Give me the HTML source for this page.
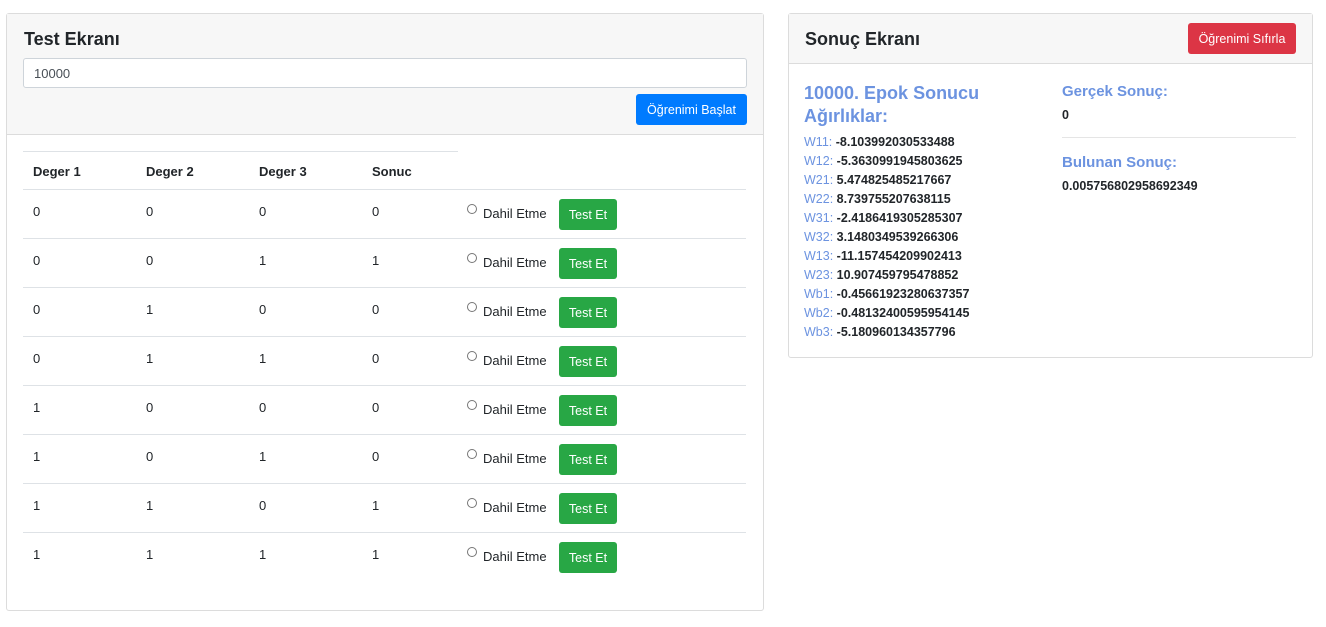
<!DOCTYPE html>
<html><head><meta charset="utf-8"><style>
*{box-sizing:border-box;margin:0;padding:0}
body{width:1326px;height:627px;background:#fff;font-family:"Liberation Sans",sans-serif;color:#212529;font-size:13px;position:relative;overflow:hidden}
.card{position:absolute;border:1px solid #dcdcdc;border-radius:3px;background:#fff}
.hdr{background:#f7f7f7;border-bottom:1px solid #dcdcdc;position:absolute;left:0;right:0;top:0}
h2{font-size:18px;font-weight:bold;position:absolute}
.btn{position:absolute;color:#fff;border-radius:3px;font-size:12.5px;display:flex;align-items:center;justify-content:center;white-space:nowrap}
.abs{position:absolute;white-space:nowrap}
.row{position:absolute;left:16px;width:723px;height:49px;border-top:1px solid #dee2e6}
.row span{position:absolute;top:14px}
.radio{position:absolute;left:444px;top:14px;width:10px;height:10px;border:1px solid #767676;border-radius:50%}
.w{position:absolute;left:15px;white-space:nowrap;font-size:12.5px}
.w b{color:#212529}
.w i{font-style:normal;color:#6c93e0}
.blue{color:#6c93e0}
</style></head><body>
<div class="card" style="left:6px;top:13px;width:758px;height:598px">
 <div class="hdr" style="height:121px">
  <h2 style="left:17px;top:15px">Test Ekranı</h2>
  <div class="abs" style="left:16px;top:44px;width:724px;height:30px;border:1px solid #ced4da;border-radius:3px;background:#fff;padding:7px 10px;color:#495057">10000</div>
  <div class="btn" style="left:629px;top:80px;width:111px;height:31px;background:#007bff">Öğrenimi Başlat</div>
 </div>
 <div class="abs" style="left:16px;top:137px;width:435px;border-top:1px solid #dee2e6"></div>
 <div class="abs" style="left:26px;top:150px;font-weight:bold">Deger 1</div>
 <div class="abs" style="left:139px;top:150px;font-weight:bold">Deger 2</div>
 <div class="abs" style="left:252px;top:150px;font-weight:bold">Deger 3</div>
 <div class="abs" style="left:365px;top:150px;font-weight:bold">Sonuc</div>
 <div class="row" style="top:175px"><span style="left:10px">0</span><span style="left:123px">0</span><span style="left:236px">0</span><span style="left:349px">0</span><div class="radio"></div><span style="left:460px;top:16px">Dahil Etme</span><div class="btn" style="left:536px;top:9px;width:58px;height:31px;background:#28a745">Test Et</div></div>
 <div class="row" style="top:224px"><span style="left:10px">0</span><span style="left:123px">0</span><span style="left:236px">1</span><span style="left:349px">1</span><div class="radio"></div><span style="left:460px;top:16px">Dahil Etme</span><div class="btn" style="left:536px;top:9px;width:58px;height:31px;background:#28a745">Test Et</div></div>
 <div class="row" style="top:273px"><span style="left:10px">0</span><span style="left:123px">1</span><span style="left:236px">0</span><span style="left:349px">0</span><div class="radio"></div><span style="left:460px;top:16px">Dahil Etme</span><div class="btn" style="left:536px;top:9px;width:58px;height:31px;background:#28a745">Test Et</div></div>
 <div class="row" style="top:322px"><span style="left:10px">0</span><span style="left:123px">1</span><span style="left:236px">1</span><span style="left:349px">0</span><div class="radio"></div><span style="left:460px;top:16px">Dahil Etme</span><div class="btn" style="left:536px;top:9px;width:58px;height:31px;background:#28a745">Test Et</div></div>
 <div class="row" style="top:371px"><span style="left:10px">1</span><span style="left:123px">0</span><span style="left:236px">0</span><span style="left:349px">0</span><div class="radio"></div><span style="left:460px;top:16px">Dahil Etme</span><div class="btn" style="left:536px;top:9px;width:58px;height:31px;background:#28a745">Test Et</div></div>
 <div class="row" style="top:420px"><span style="left:10px">1</span><span style="left:123px">0</span><span style="left:236px">1</span><span style="left:349px">0</span><div class="radio"></div><span style="left:460px;top:16px">Dahil Etme</span><div class="btn" style="left:536px;top:9px;width:58px;height:31px;background:#28a745">Test Et</div></div>
 <div class="row" style="top:469px"><span style="left:10px">1</span><span style="left:123px">1</span><span style="left:236px">0</span><span style="left:349px">1</span><div class="radio"></div><span style="left:460px;top:16px">Dahil Etme</span><div class="btn" style="left:536px;top:9px;width:58px;height:31px;background:#28a745">Test Et</div></div>
 <div class="row" style="top:518px"><span style="left:10px">1</span><span style="left:123px">1</span><span style="left:236px">1</span><span style="left:349px">1</span><div class="radio"></div><span style="left:460px;top:16px">Dahil Etme</span><div class="btn" style="left:536px;top:9px;width:58px;height:31px;background:#28a745">Test Et</div></div>
</div>
<div class="card" style="left:788px;top:13px;width:525px;height:345px">
 <div class="hdr" style="height:50px">
  <h2 style="left:16px;top:15px">Sonuç Ekranı</h2>
  <div class="btn" style="left:399px;top:9px;width:108px;height:31px;background:#dc3545">Öğrenimi Sıfırla</div>
 </div>
 <div class="abs blue" style="left:15px;top:68px;font-size:18px;line-height:23px;font-weight:bold">10000. Epok Sonucu<br>Ağırlıklar:</div>
 <div class="w" style="top:121px"><i>W11:</i> <b>-8.103992030533488</b></div>
 <div class="w" style="top:140px"><i>W12:</i> <b>-5.3630991945803625</b></div>
 <div class="w" style="top:159px"><i>W21:</i> <b>5.474825485217667</b></div>
 <div class="w" style="top:178px"><i>W22:</i> <b>8.739755207638115</b></div>
 <div class="w" style="top:197px"><i>W31:</i> <b>-2.4186419305285307</b></div>
 <div class="w" style="top:216px"><i>W32:</i> <b>3.1480349539266306</b></div>
 <div class="w" style="top:235px"><i>W13:</i> <b>-11.157454209902413</b></div>
 <div class="w" style="top:254px"><i>W23:</i> <b>10.907459795478852</b></div>
 <div class="w" style="top:273px"><i>Wb1:</i> <b>-0.45661923280637357</b></div>
 <div class="w" style="top:292px"><i>Wb2:</i> <b>-0.48132400595954145</b></div>
 <div class="w" style="top:311px"><i>Wb3:</i> <b>-5.180960134357796</b></div>
 <div class="abs blue" style="left:273px;top:69px;font-size:15px;font-weight:bold">Gerçek Sonuç:</div>
 <div class="abs" style="left:273px;top:94px;font-weight:bold;font-size:12.5px">0</div>
 <div class="abs" style="left:273px;top:123px;width:234px;border-top:1px solid #e5e5e5"></div>
 <div class="abs blue" style="left:273px;top:140px;font-size:15px;font-weight:bold">Bulunan Sonuç:</div>
 <div class="abs" style="left:273px;top:165px;font-weight:bold;font-size:12.5px">0.005756802958692349</div>
</div>
</body></html>
